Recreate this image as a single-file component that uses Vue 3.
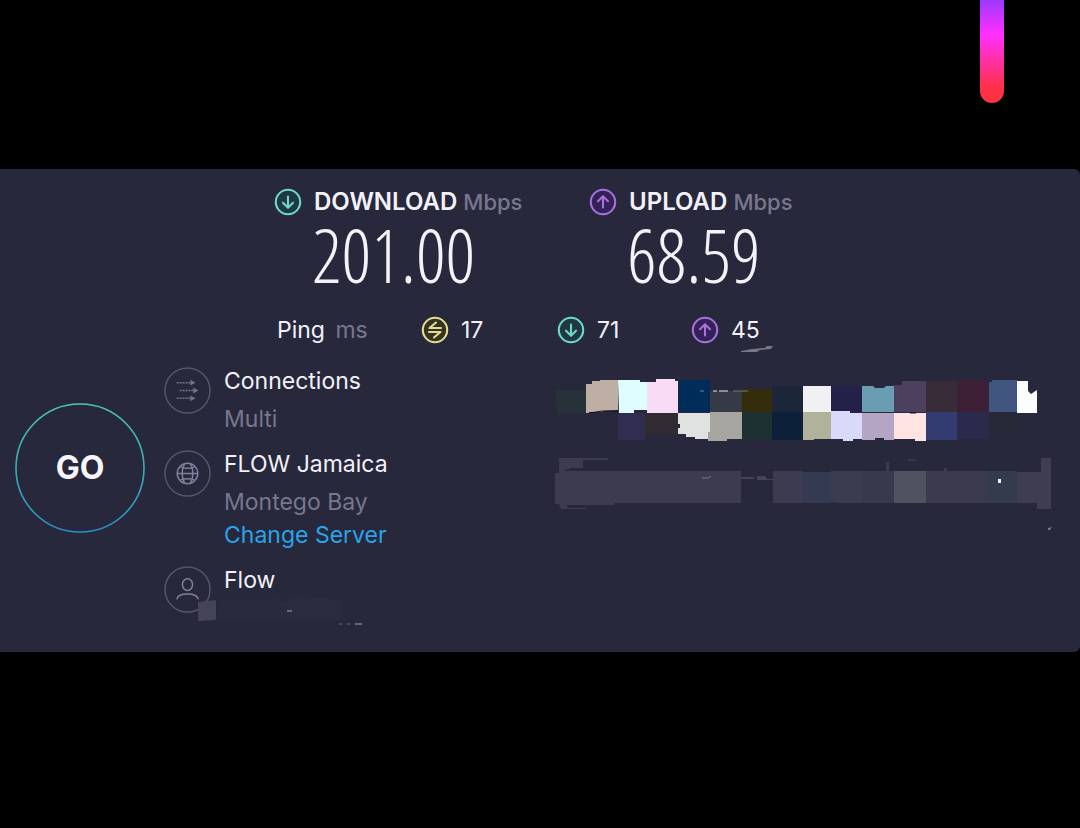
<script setup>
const topBlocks = [
  ['M555 390H586V413H557Z', '#263139'],
  ['M586 384H592V381H600V380H618V410L603 411V412H589V413H586Z', '#bfaea4'],
  ['M618 380H640V382H647V410H634V413H619Z', '#dffcff'],
  ['M647 382H656V379H675V381H678V413H647Z', '#f8dbf5'],
  ['M679 380H710V412H679Z', '#002c59'],
  ['M710 391H742V412H710Z', '#353a46'],
  ['M742 389H772V412H742Z', '#342c0b'],
  ['M772 386H803V412H772Z', '#1b2738'],
  ['M803 386H831V412H803Z', '#f1f0f3'],
  ['M831 386H862V412H831Z', '#232149'],
  ['M862 386H873L875 388H884L886 386H894V412H862Z', '#6a9db1'],
  ['M894 385H902V381H926V412H894Z', '#4c405e'],
  ['M926 381H957V412H926Z', '#392c39'],
  ['M957 380H988V412H957Z', '#3d2036'],
  ['M989 382H992V380H1017V412H989Z', '#40567f'],
  ['M1017 381H1028V391L1031 394L1037 390V413H1017Z', '#fdfdfd'],
  ['M618 413H645V440H618Z', '#302d50'],
  ['M645 413H678V435H645Z', '#302b31'],
  ['M678 413H710V439H695V437H686V434H678V428H680V424H678Z', '#dfe2e0'],
  ['M710 412H742V439H727V441H708V432H710Z', '#a7a59f'],
  ['M742 412H772V439H742Z', '#1d3132'],
  ['M772 412H803V440H772Z', '#0d2039'],
  ['M803 412H831V439H814V440H803Z', '#b0b29a'],
  ['M831 411H850V413H862V439H853V441H843V439H831Z', '#d9dafa'],
  ['M862 413H894V440H884V438H875V440H862Z', '#b3a5c3'],
  ['M894 413H926V441H915V439H894Z', '#ffe3e2'],
  ['M926 412H957V440H926Z', '#323c70'],
  ['M957 412H989V439H957Z', '#2a2a4c'],
  ['M990 413H1020V432H990Z', '#272a36'],
]
const lowBlocks = [
  ['M559 458H608V460H583V468H571L559 473Z', '#3c3b50'],
  ['M555 473H559V471H741V503H614V505H566L568 508H586V509H561L559 504H555Z', '#3c3b50'],
  ['M741 477H754V479H741ZM757 476H765L767 479H773V480H757Z', '#454457'],
  ['M773 471H803V503H773Z', '#3c3b50'],
  ['M803 472H831V503H803Z', '#353a53'],
  ['M831 471H862V503H842L831 502Z', '#3c3c50'],
  ['M862 471H894V503H862Z', '#39394e'],
  ['M886 463L889 461V471H886ZM944 468H947V472H944ZM908 459L917 460V461H908Z', '#3c3b50'],
  ['M894 471H926V503H894Z', '#50525f'],
  ['M926 471H988V503H926Z', '#3a394e'],
  ['M988 471H1017V503H988Z', '#343b4c'],
  ['M1017 472H1041V458H1051V509H1037V503H1017Z', '#3e3d51'],
]
</script>

<template>
  <main class="page">
    <header class="top"><div class="stripe"></div></header>
    <section class="panel">
      <svg width="0" height="0" class="defs" aria-hidden="true">
        <symbol id="down" viewBox="0 0 28 28">
          <circle cx="14" cy="14" r="12.2" /><path d="M14 8.500V19.500M9 14.700L14 19.700L19 14.700" />
        </symbol>
        <symbol id="up" viewBox="0 0 28 28">
          <circle cx="14" cy="14" r="12.2" /><path d="M14 19.500V8.500M9 13.300L14 8.300L19 13.300" />
        </symbol>
      </svg>

      <div class="results">
        <div class="metric">
          <svg class="icon teal"><use href="#down" /></svg>
          <h2>DOWNLOAD <span>Mbps</span></h2>
          <p class="speed">201.00</p>
        </div>
        <div class="metric">
          <svg class="icon violet"><use href="#up" /></svg>
          <h2>UPLOAD <span>Mbps</span></h2>
          <p class="speed">68.59</p>
        </div>
      </div>

      <div class="pings">
        <div>Ping <span class="unit">ms</span></div>
        <div class="ping">
          <svg class="icon yellow" viewBox="0 0 28 28">
            <circle cx="14" cy="14" r="12.2" />
            <path d="M20 12H8.5L15 6.500M8 16H19.5L13 21.500" />
          </svg>17
        </div>
        <div class="ping"><svg class="icon teal"><use href="#down" /></svg>71</div>
        <div class="ping">
          <svg class="icon violet"><use href="#up" /></svg>45
          <svg class="smudge" viewBox="0 0 34 8"><path d="M1 5L12 3L25 2L27 0H33L31 3L20 4L17 6H1Z" /></svg>
        </div>
      </div>

      <div class="details">
        <button class="go" type="button">
          <svg viewBox="0 0 130 130" aria-hidden="true">
            <defs>
              <linearGradient id="ring" x1="0" y1="0" x2="0" y2="1">
                <stop offset="0" stop-color="#4ac6b7" /><stop offset="1" stop-color="#2b8fc8" />
              </linearGradient>
            </defs>
            <circle cx="65" cy="65" r="64" fill="none" stroke="url(#ring)" stroke-width="1.6" />
          </svg>
          <span>GO</span>
        </button>

        <ul class="list">
          <li>
            <svg class="badge" viewBox="0 0 48 48">
              <circle cx="24" cy="24" r="23" />
              <path d="M13 16H28M16 24H31M13 32H28" stroke-dasharray="2 1" />
              <path class="solid" d="M27 13L32 16L27 19ZM30 21L35 24L30 27ZM27 29L32 32L27 35Z" />
            </svg>
            <div class="text"><h3>Connections</h3><p>Multi</p></div>
          </li>
          <li>
            <svg class="badge" viewBox="0 0 48 48">
              <circle cx="24" cy="24" r="23" />
              <g class="glyph"><circle cx="24" cy="24" r="10.5" /><path d="M21 14Q16 24 21 34M27 14Q32 24 27 34M13.500 24H34.500M17 17.500Q24 20 31 17.500M17 30.500Q24 28 31 30.500" /></g>
            </svg>
            <div class="text"><h3>FLOW Jamaica</h3><p>Montego Bay</p><a href="#">Change Server</a></div>
          </li>
          <li>
            <svg class="badge" viewBox="0 0 48 48">
              <circle cx="24" cy="24" r="23" />
              <g class="glyph"><ellipse cx="24" cy="19" rx="5.200" ry="6" /><path d="M13 34Q14 28.500 24 28.500Q34 28.500 35 34" /></g>
            </svg>
            <div class="text">
              <h3>Flow</h3>
              <svg class="masked" viewBox="196 596 180 32">
                <path fill="#282b3d" d="M218 601L276 598L280 596V620H218Z" />
                <path fill="#292c3e" d="M280 603L298 596L325 598L328 600H341V620H280Z" />
                <path fill="#444359" d="M198 602L216 600V620L198 621Z" />
                <path stroke="#a6a7b5" d="M287 611H292M355 624H362" /><path stroke="#656678" d="M339 624H342M347 624H350" />
              </svg>
            </div>
          </li>
        </ul>

        <svg class="mosaic" viewBox="554 367 500 170" aria-hidden="true">
          <path v-for="([d, c], i) in topBlocks" :key="i" :d="d" :fill="c" />
          <path v-for="([d, c], i) in lowBlocks" :key="'l' + i" :d="d" :fill="c" />
          <path stroke="#e9e9ef" d="M713 391H717M719 391H728" />
          <path fill="none" stroke="#77788a" d="M700 391H704M733 391H748M702 478H708L711 476" />
          <path fill="none" stroke="#111019" d="M589 413L603 411H618M910 413H916" />
          <path fill="#f3f3f6" d="M998 479H1001V483H998Z" />
          <path fill="#77788a" d="M1048 528L1052 527L1050 530H1048Z" />
        </svg>
      </div>
    </section>
  </main>
</template>

<style>
body { margin: 0; background: #000; }
</style>

<style scoped>
.page {
  min-height: 100vh;
  background: #000;
  color: #f2f2f8;
  font: 400 23px/26px Inter, "Open Sans", sans-serif;
}
h2, h3, p, ul { margin: 0; padding: 0; font: inherit; list-style: none; }
.top { height: 169px; display: flex; justify-content: flex-end; padding-right: 76px; box-sizing: border-box; }
.stripe {
  width: 24px;
  height: 103px;
  border-radius: 0 0 12px 12px;
  background: linear-gradient(#9c38ff 0, #ff30ff 34px, #ff3048 88px, #ff3340);
}
.panel { background: #27283c; border-radius: 0 6px 6px 0; padding: 17px 0 22px; }
.defs { position: absolute; }
.results { display: grid; grid-template-columns: 315px 1fr; padding-left: 274px; }
.metric { display: grid; grid-template-columns: 38px 1fr; align-items: center; }
h2 { padding-left: 2px; font-size: 24px; font-weight: 600; line-height: 32px; white-space: nowrap; }
h2 span { font-size: 22px; font-weight: 500; }
h2 span, .unit, .text p { color: #77778f; }
.speed {
  grid-column: 2;
  font: 300 74px/74px "Noto Sans ExtraCondensed Light", "Noto Sans ExtraCondensed", "Open Sans Condensed Light", "Open Sans Condensed", "Liberation Sans Narrow", "Roboto Condensed", sans-serif;
}
.icon { width: 28px; height: 28px; flex: none; fill: none; stroke-width: 2.1; stroke-linecap: round; stroke-linejoin: round; }
.teal { stroke: #6fd8ce; fill: #20383f; }
.violet { stroke: #a673dc; fill: #352057; }
.yellow { stroke: #e5dc91; fill: #34331f; }
.icon path { fill: none; }
.pings {
  display: grid;
  grid-template-columns: 144px 136px 134px 1fr;
  padding-left: 277px;
  margin: 22px 0 21px;
  line-height: 32px;
}
.unit { margin-left: 4px; }
.ping { display: flex; align-items: center; gap: 12px; position: relative; }
.smudge { position: absolute; left: 49px; top: 32px; width: 34px; height: 8px; fill: #77778a; }
.details { display: grid; grid-template-columns: 149px 390px 1fr; padding-left: 15px; align-items: start; }
.go {
  width: 130px;
  height: 130px;
  margin-top: 36px;
  padding: 0;
  border: 0;
  border-radius: 50%;
  background: none;
  color: #f5f5fa;
  font: 700 32px/130px Inter, sans-serif;
  display: grid;
  cursor: pointer;
}
.go > * { grid-area: 1 / 1; }
.list { display: grid; gap: 18px; }
.list li { display: flex; gap: 13px; }
.badge { width: 47px; height: 47px; flex: none; fill: none; stroke: #55556b; stroke-width: 1.5; }
.badge path { stroke: #74748a; }
.glyph { stroke: #80809a; }
.glyph path { stroke: inherit; }
.badge .solid { fill: #74748a; stroke: none; }
.text { display: flex; flex-direction: column; align-items: flex-start; position: relative; padding-top: 1px; }
.text p { margin-top: 12px; }
.text a { margin-top: 7px; color: #2ba3e8; text-decoration: none; }
.list li:last-child { min-height: 64px; }
.masked { position: absolute; left: -28px; top: 30px; width: 180px; height: 32px; }
.mosaic { width: 500px; height: 170px; max-width: 100%; overflow: visible; }
</style>
